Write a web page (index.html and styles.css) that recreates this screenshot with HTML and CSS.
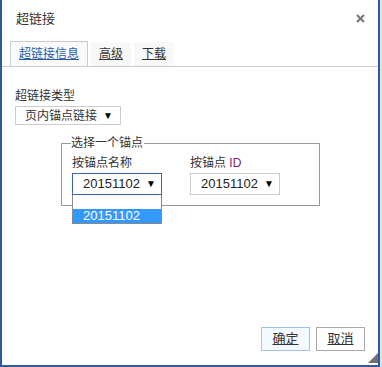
FILE: index.html
```html
<!DOCTYPE html>
<html>
<head>
    <title>超链接</title>
    <link rel="stylesheet" href="styles.css">
</head>
<body>
    <div class="dialog">
        <div class="title-bar">
            <span class="title">超链接</span>
            <svg class="close" width="9" height="9" viewBox="0 0 9 9">
                <path d="M1 1 L8 8 M8 1 L1 8" stroke="#7a7a7a" stroke-width="2.2"/>
            </svg>
        </div>

        <div class="tabs">
            <a class="tab tab-active" href="#">超链接信息</a>
            <a class="tab" href="#">高级</a>
            <a class="tab" href="#">下载</a>
        </div>

        <div class="dialog-body">
            <div class="field-label">超链接类型</div>
            <div class="select select-type">
                <span>页内锚点链接</span>
                <span class="arrow">&#9660;</span>
            </div>

            <fieldset class="anchor-box">
                <legend>选择一个锚点</legend>
                <div class="anchor-cols">
                    <div class="anchor-col">
                        <div class="field-label">按锚点名称</div>
                        <div class="select select-num select-focus">
                            <span>20151102</span>
                            <span class="arrow">&#9660;</span>
                        </div>
                        <!-- open option list -->
                        <div class="dropdown">
                            <div class="option">&nbsp;</div>
                            <div class="option option-hover">20151102</div>
                        </div>
                    </div>
                    <div class="anchor-col">
                        <div class="field-label">按锚点 <span class="id">ID</span></div>
                        <div class="select select-num">
                            <span>20151102</span>
                            <span class="arrow">&#9660;</span>
                        </div>
                    </div>
                </div>
            </fieldset>
        </div>

        <div class="footer">
            <a class="btn btn-ok" href="#">确定</a>
            <a class="btn" href="#">取消</a>
        </div>

        <svg class="grip" width="10" height="10" viewBox="0 0 10 10">
            <polygon points="10,0 10,10 0,10" fill="#707070"/>
        </svg>
    </div>
</body>
</html>
```

FILE: styles.css
```css
body {
    margin: 0;
    background: #dce2e9;
    font-family: "Liberation Sans", "Noto Sans CJK SC", sans-serif;
    font-size: 12px;
    color: #333;
}

.dialog {
    position: relative;
    box-sizing: border-box;
    width: 380px;
    height: 367px;
    background: #fff;
    border: 2px solid #2c5ba3;
    border-top: none;
    display: flex;
    flex-direction: column;
}

.title-bar {
    height: 37px;
    padding: 0 13px 0 14px;
    display: flex;
    align-items: center;
    justify-content: space-between;
}

.title {
    font-size: 13px;
    line-height: 16px;
}

.tabs {
    margin-top: 4px;
    padding-left: 8px;
    display: flex;
    gap: 3px;
    align-items: flex-end;
    border-bottom: 1px solid #cccccc;
}

.tab {
    height: 24px;
    line-height: 24px;
    padding: 0 8px;
    background: #f8f8f8;
    color: #333;
    font-size: 12px;
}

.tab-active {
    border: 1px solid #cccccc;
    border-bottom: none;
    background: #fafafa;
    color: #2a5aa8;
}

.dialog-body {
    padding: 21px 13px 0;
}

.field-label {
    line-height: 16px;
}

.select {
    box-sizing: border-box;
    height: 19px;
    margin-top: 2px;
    border: 1px solid #cccccc;
    background: #fff;
    display: flex;
    align-items: center;
    justify-content: space-between;
    line-height: 16px;
}

.select-type {
    width: 106px;
    padding: 0 7px 0 9px;
}

.arrow {
    font-size: 10px;
    color: #000;
}

.select-num {
    width: 90px;
    height: 22px;
    padding: 0 5px 0 10px;
    font-size: 13px;
    color: #222;
}

.select-focus {
    border-color: #3a66ad;
}

.anchor-box {
    width: 259px;
    box-sizing: border-box;
    margin: 10px 0 0 46px;
    padding: 4px 10px 10px;
    border: 1px solid #9a9a9a;
    min-width: 0;
}

.anchor-box legend {
    padding: 0 1px 0 0;
    margin-left: -1px;
    line-height: 16px;
    font-size: 12px;
}

.anchor-cols {
    display: flex;
    gap: 28px;
}

.anchor-col {
    position: relative;
}

.id {
    color: #7a1a6a;
}

.dropdown {
    position: absolute;
    left: 0;
    top: 40px;
    width: 90px;
    box-sizing: border-box;
    border: 1px solid #8a8a8a;
    border-top: none;
    background: #fff;
    z-index: 2;
}

.option {
    height: 14px;
    line-height: 14px;
    padding-left: 10px;
    font-size: 13px;
}

.option-hover {
    background: #3399ff;
    color: #fff;
}

.footer {
    margin-top: auto;
    padding: 0 13px 14px 0;
    display: flex;
    justify-content: flex-end;
    gap: 6px;
}

.btn {
    box-sizing: border-box;
    width: 49px;
    height: 24px;
    line-height: 22px;
    text-align: center;
    border: 1px solid #aaaaaa;
    background: #fff;
    color: #333;
    font-size: 13px;
}

.btn-ok {
    border-color: #9ec3f3;
    background: #f4f8ff;
}

.grip {
    position: absolute;
    right: 0;
    bottom: 2px;
}
```
